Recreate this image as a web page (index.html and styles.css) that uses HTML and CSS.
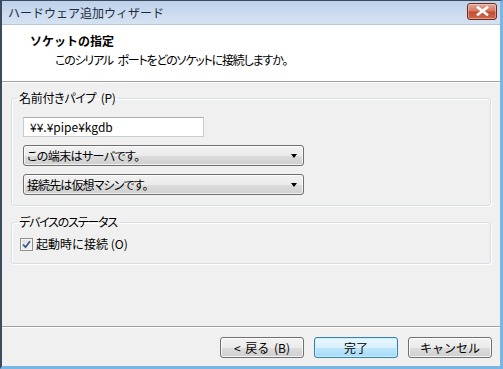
FILE: index.html
```html
<!DOCTYPE html>
<html lang="ja">
<head>
<meta charset="utf-8">
<link rel="stylesheet" href="styles.css">
</head>
<body>
<div class="window">
  <div class="titlebar">
    <span class="title">ハードウェア追加ウィザード</span>
    <span class="close"><svg width="13" height="10" viewBox="0 0 13 10"><path d="M2 1.5 L11 8.5 M11 1.5 L2 8.5" stroke="#fff" stroke-width="2.6" stroke-linecap="square"/></svg></span>
  </div>
  <div class="header">
    <div class="h-title">ソケットの指定</div>
    <div class="h-sub">このシリアル ポートをどのソケットに接続しますか。</div>
  </div>
  <div class="content">
    <fieldset class="group g1">
      <legend class="lg1">名前付きパイプ (P)</legend>
      <div class="g1-body">
        <div class="textbox">¥¥.¥pipe¥kgdb</div>
        <div class="select"><span class="sel-text">この端末はサーバです。</span><span class="arrow"></span></div>
        <div class="select"><span class="sel-text tight">接続先は仮想マシンです。</span><span class="arrow"></span></div>
      </div>
    </fieldset>
    <fieldset class="group g2">
      <legend class="lg2">デバイスのステータス</legend>
      <div class="check-row">
        <span class="checkbox"><svg width="9" height="9" viewBox="0 0 9 9"><path d="M1 4.5 L3.5 7.2 L8 1.2" fill="none" stroke="#3a5a8c" stroke-width="1.8"/></svg></span>
        <span>起動時に接続 (O)</span>
      </div>
    </fieldset>
    <div class="spacer"></div>
    <div class="footer">
      <div class="btn">&lt; 戻る (B)</div>
      <div class="btn default">完了</div>
      <div class="btn">キャンセル</div>
    </div>
  </div>
</div>
</body>
</html>
```
FILE: styles.css
```css
* { box-sizing: border-box; }
html, body { margin: 0; padding: 0; }
body {
  width: 503px;
  height: 369px;
  overflow: hidden;
  font-family: "Noto Sans CJK JP", "Noto Sans", sans-serif;
  font-size: 12px;
  color: #000;
  background: #6fb2e0;
}
.window {
  width: 503px;
  height: 369px;
  display: flex;
  flex-direction: column;
  border-top: 1px solid #3b4a5c;
  border-left: 2px solid #3b4a5c;
  border-right: 3px solid #78b6e4;
  border-bottom: 3px solid #78b6e4;
  background: #f0f0f0;
}
.titlebar {
  height: 24px;
  flex: none;
  display: flex;
  align-items: center;
  justify-content: space-between;
  padding: 0 3px 0 6px;
  background: linear-gradient(#bcd2ea, #cddcef 60%, #d4e2f2);
  border-bottom: 1px solid #b6c7da;
}
.title {
  color: #1c2c3e;
  font-size: 12px;
  line-height: 14px;
}
.close {
  width: 30px;
  height: 17px;
  margin-top: -3px;
  display: flex;
  align-items: center;
  justify-content: center;
  border: 1px solid #6b2a22;
  border-radius: 3px;
  background: linear-gradient(#e6a798, #d3765f 48%, #c24a2f 52%, #cf6a4c);
  box-shadow: inset 0 0 0 1px rgba(255,255,255,0.35);
}
.header {
  height: 57px;
  flex: none;
  background: #fff;
  border-bottom: 1px solid #a0a0a0;
  box-shadow: 0 1px 0 #fff;
  padding: 8px 0 0 28px;
}
.h-title {
  font-weight: bold;
  line-height: 16px;
}
.h-sub {
  margin: 3px 0 0 25px;
  line-height: 16px;
  font-feature-settings: "palt";
  letter-spacing: -1.2px;
  word-spacing: 3px;
}
.content {
  flex: 1;
  display: flex;
  flex-direction: column;
}
.group {
  margin: 0 9px 0 9px;
  padding: 0;
  border: 1px solid #d5dfe5;
  border-radius: 3px;
  box-shadow: inset 1px 1px 0 #fff, 1px 1px 0 #fff;
  min-width: 0;
}
.group legend {
  margin-left: 5px;
  padding: 0 2px;
  line-height: 14px;
  font-size: 12px;
  font-feature-settings: "palt";
}
.lg1 { letter-spacing: -0.3px; word-spacing: 2px; }
.lg2 { letter-spacing: -1.2px; }
.g1 { margin-top: 9px; }
.g1-body {
  padding: 12px 0 10px 11px;
  display: flex;
  flex-direction: column;
  gap: 8px;
}
.textbox {
  width: 181px;
  height: 20px;
  background: #fff;
  border: 1px solid #c4ccd4;
  border-top-color: #abadb3;
  padding: 0 0 0 6px;
  line-height: 18px;
}
.select {
  width: 281px;
  height: 21px;
  border: 1px solid #707070;
  border-radius: 3px;
  background: linear-gradient(#f2f2f2, #ebebeb 50%, #dddddd 51%, #cfcfcf);
  box-shadow: inset 0 0 0 1px rgba(255,255,255,0.7);
  display: flex;
  align-items: center;
  justify-content: space-between;
  padding: 0 6px 0 3px;
  line-height: 18px;
}
.sel-text {
  font-feature-settings: "palt";
  letter-spacing: -0.6px;
}
.sel-text.tight { letter-spacing: -0.9px; }
.arrow {
  width: 0;
  height: 0;
  border-left: 3.5px solid transparent;
  border-right: 3.5px solid transparent;
  border-top: 4px solid #000;
  margin-top: 1px;
}
.g2 { margin-top: 9px; }
.check-row {
  display: flex;
  align-items: center;
  gap: 3px;
  padding: 7px 0 11px 8px;
  line-height: 16px;
}
.checkbox {
  width: 13px;
  height: 13px;
  border: 1px solid #8e8f8f;
  background: linear-gradient(135deg, #dcdcdc, #f6f6f6);
  box-shadow: inset 0 0 0 1px #f4f4f4;
  display: flex;
  align-items: center;
  justify-content: center;
}
.spacer { flex: 1; }
.footer {
  flex: none;
  height: 40px;
  border-top: 1px solid #a0a0a0;
  box-shadow: inset 0 1px 0 #fff;
  display: flex;
  justify-content: flex-end;
  align-items: flex-start;
  gap: 10px;
  padding: 10px 8px 0 0;
}
.btn {
  width: 84px;
  height: 21px;
  border: 1px solid #707070;
  border-radius: 3px;
  background: linear-gradient(#f2f2f2, #ebebeb 50%, #dddddd 51%, #cfcfcf);
  box-shadow: inset 0 0 0 1px rgba(255,255,255,0.75);
  display: flex;
  align-items: center;
  justify-content: center;
  line-height: 16px;
  word-spacing: 2px;
}
.btn.default {
  border-color: #3c7fb1;
  background: linear-gradient(#eaf6fd, #d9f0fc 50%, #bee6fd 51%, #a7d9f5);
  box-shadow: inset 0 0 0 1px #c5f1ff;
}
```
